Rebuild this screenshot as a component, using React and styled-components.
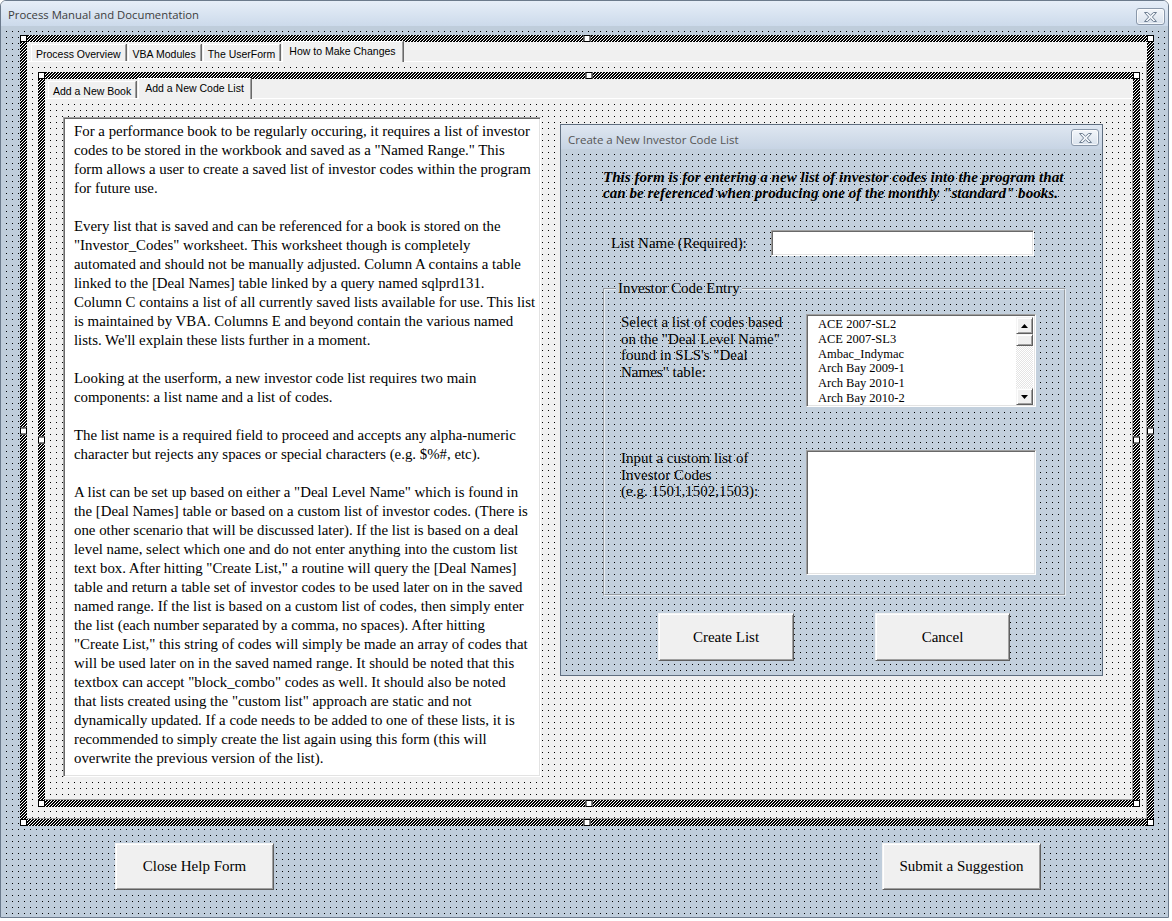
import React from 'react';
import styled, { createGlobalStyle, css } from 'styled-components';

const GlobalStyle = createGlobalStyle`
  html, body {
    margin: 0;
    padding: 0;
    background: #ffffff;
  }
  body {
    font-family: "Liberation Serif", "Times New Roman", serif;
    color: #000;
  }
  * {
    box-sizing: border-box;
  }
`;

// designer grid: one black pixel every 6px on the given colour
const dotGrid = (bg) => css`
  background-color: #000;
  background-image: linear-gradient(90deg, ${bg} 5px, transparent 5px),
    linear-gradient(${bg} 5px, transparent 5px);
  background-size: 6px 6px;
`;

const hatch = `url("data:image/svg+xml,%3Csvg xmlns='http://www.w3.org/2000/svg' width='3' height='3'%3E%3Crect width='3' height='3' fill='white'/%3E%3Cpath d='M1 0h2v1H1zM0 1h2v1H0zM2 2h1v1H2zM0 2h1v1H0z' fill='black'/%3E%3C/svg%3E")`;

const raised = css`
  background: #f0f0f0;
  border: 1px solid;
  border-color: #f4f4f4 #5f5f5f #5f5f5f #f4f4f4;
  box-shadow: inset 1px 1px 0 #ffffff, inset -1px -1px 0 #a0a0a0;
`;

const sunken = css`
  background: #ffffff;
  border: 1px solid;
  border-color: #a0a0a0 #ffffff #ffffff #a0a0a0;
  box-shadow: inset 1px 1px 0 #696969, inset -1px -1px 0 #e3e3e3;
`;

const Window = styled.div`
  width: 1169px;
  height: 918px;
  border: 1px solid #6b7a8c;
  border-radius: 6px 6px 0 0;
  display: flex;
  flex-direction: column;
  overflow: hidden;
`;

const TitleBar = styled.div`
  height: 25px;
  flex: none;
  display: flex;
  justify-content: space-between;
  align-items: flex-start;
  padding: 0 3px 0 7px;
  background: linear-gradient(#e6eef8, #ccdaeb);
`;

const Title = styled.div`
  font-family: "Open Sans", "Noto Sans", sans-serif;
  font-size: 11.3px;
  line-height: 28px;
  color: #3d3d3d;
`;

const CloseBox = styled.div`
  width: ${({ $w }) => $w}px;
  height: 17px;
  margin-top: ${({ $top }) => $top}px;
  margin-right: ${({ $right }) => $right}px;
  border: 1px solid #8a98aa;
  border-radius: 3px;
  background: linear-gradient(#f3f6fa, #d9e2ed);
  box-shadow: inset 0 0 0 1px rgba(255, 255, 255, 0.7);
  display: flex;
  align-items: center;
  justify-content: center;
`;

const FormBody = styled.div`
  flex: 1;
  ${dotGrid('#bfcddb')}
  padding: 9px 0 0 19px;
  display: flex;
  flex-direction: column;
`;

const Selection = styled.div`
  position: relative;
  width: ${({ $w }) => $w}px;
  height: ${({ $h }) => $h}px;
  padding: 7px;
  background: ${hatch};
`;

const Handle = styled.span`
  position: absolute;
  width: 7px;
  height: 7px;
  background: #fff;
  border: 1px solid #000;
  ${({ $pos }) => $pos.includes('t') && css`top: 0;`}
  ${({ $pos }) => $pos.includes('b') && css`bottom: 0;`}
  ${({ $pos }) => $pos.includes('l') && css`left: 0;`}
  ${({ $pos }) => $pos.includes('r') && css`right: 0;`}
  ${({ $pos }) => ($pos === 't' || $pos === 'b') && css`left: 50%; transform: translateX(-50%);`}
  ${({ $pos }) => ($pos === 'l' || $pos === 'r') && css`top: 50%; transform: translateY(-50%);`}
`;

const MultiPage = styled.div`
  width: 100%;
  height: 100%;
  display: flex;
  flex-direction: column;
  background: #f0f0f0;
`;

const TabStrip = styled.div`
  height: 20px;
  flex: none;
  display: flex;
  align-items: flex-end;
  padding-left: ${({ $pl }) => $pl}px;
  border-bottom: 1px solid #ffffff;
`;

const Tab = styled.div`
  position: relative;
  height: ${({ $active }) => ($active ? 21 : 17)}px;
  margin-bottom: ${({ $active }) => ($active ? -1 : 0)}px;
  padding: ${({ $active }) => ($active ? '2px 6px 0' : '2px 4px 0')};
  margin-right: 2px;
  font-family: "Liberation Sans", Arial, sans-serif;
  font-size: 10.5px;
  line-height: 14px;
  white-space: nowrap;
  background: #f0f0f0;
  border-top: 1px solid #ffffff;
  border-left: 1px solid #ffffff;
  border-right: 1px solid #a0a0a0;
  box-shadow: 1px 0 0 #696969;
  z-index: ${({ $active }) => ($active ? 1 : 0)};
`;

const Page = styled.div`
  flex: 1;
  ${dotGrid('#f0f0f0')}
  border-right: 1px solid #a0a0a0;
  border-bottom: 1px solid #a0a0a0;
  padding: ${({ $pad }) => $pad};
  display: flex;
  align-items: flex-start;
`;

const TextBox = styled.div`
  ${sunken}
  width: 478px;
  height: 660px;
  flex: none;
  padding: 4px 6px 0 10px;
  font-size: 14.85px;
  line-height: 19px;
`;

const TextLine = styled.div`
  height: 19px;
  white-space: nowrap;
`;

const EmbeddedForm = styled.div`
  width: 543px;
  height: 552px;
  margin: 7px 0 0 19px;
  flex: none;
  border: 1px solid #5f6e80;
  display: flex;
  flex-direction: column;
`;

const EmbeddedTitle = styled.div`
  height: 24px;
  flex: none;
  display: flex;
  justify-content: space-between;
  align-items: flex-start;
  padding-left: 7px;
  background: linear-gradient(#dfe7f1, #c7d4e4);
  font-family: "Open Sans", "Noto Sans", sans-serif;
  font-size: 11.5px;
  line-height: 29px;
  color: #555;
`;

const EmbeddedBody = styled.div`
  flex: 1;
  ${dotGrid('#c3d0dd')}
  padding: 20px 0 0 42px;
  display: flex;
  flex-direction: column;
`;

const Intro = styled.div`
  font-weight: bold;
  font-style: italic;
  font-size: 15.1px;
  line-height: 16px;
  white-space: nowrap;
`;

const NameRow = styled.div`
  margin-top: 29px;
  padding-left: 8px;
  display: flex;
  align-items: center;
`;

const Label = styled.div`
  width: ${({ $w }) => $w}px;
  font-size: 15px;
  line-height: ${({ $lh }) => $lh || 17}px;
  flex: none;
`;

const Input = styled.div`
  ${sunken}
  width: ${({ $w }) => $w}px;
  height: ${({ $h }) => $h}px;
  flex: none;
`;

const Frame = styled.fieldset`
  width: 463px;
  margin: 24px 0 0;
  padding: 17px 0 19px 16px;
  border: 2px groove #e8eef4;
  min-width: 0;
`;

const FrameLegend = styled.legend`
  margin-left: -5px;
  padding: 0 2px;
  font-size: 15px;
  line-height: 17px;
`;

const FrameRow = styled.div`
  display: flex;
  align-items: flex-start;
  margin-top: ${({ $mt }) => $mt || 0}px;
`;

const ListBox = styled.div`
  ${sunken}
  width: 230px;
  height: 93px;
  display: flex;
  padding: 1px 2px 1px 1px;
`;

const ListItems = styled.div`
  flex: 1;
  padding: 1px 0 0 10px;
  font-size: 12.5px;
  line-height: 14.8px;
  overflow: hidden;
`;

const ScrollBar = styled.div`
  width: 17px;
  margin-top: 1px;
  display: flex;
  flex-direction: column;
  background: repeating-conic-gradient(#ffffff 0 25%, #e4e4e4 0 50%) 0 0 / 2px 2px;
`;

const ScrollButton = styled.div`
  ${raised}
  height: ${({ $h }) => $h}px;
  flex: none;
  display: flex;
  align-items: center;
  justify-content: center;
`;

const ScrollTrack = styled.div`
  flex: 1;
`;

const ButtonRow = styled.div`
  display: flex;
  gap: ${({ $gap }) => $gap}px;
  margin-top: ${({ $mt }) => $mt}px;
  padding-left: ${({ $pl }) => $pl}px;
`;

const FormButton = styled.div`
  ${raised}
  width: ${({ $w }) => $w}px;
  height: ${({ $h }) => $h}px;
  display: flex;
  align-items: center;
  justify-content: center;
  font-size: 15px;
`;

const CloseGlyph = ({ w = 13, h = 10 }) => (
  <svg width={w} height={h} viewBox="0 0 13 10">
    <polygon
      points="0.5,0.5 3.5,0.5 6.5,3.2 9.5,0.5 12.5,0.5 8.4,5 12.5,9.5 9.5,9.5 6.5,6.8 3.5,9.5 0.5,9.5 4.6,5"
      fill="#eef2f7"
      stroke="#6f7f92"
      strokeWidth="1"
    />
  </svg>
);

const Arrow = ({ up }) => (
  <svg width="7" height="4" viewBox="0 0 7 4">
    <polygon points={up ? '3.5,0 7,4 0,4' : '0,0 7,0 3.5,4'} fill="#000" />
  </svg>
);

const handles = ['tl', 't', 'tr', 'l', 'r', 'bl', 'b', 'br'];

const helpLines = [
  'For a performance book to be regularly occuring, it requires a list of investor',
  'codes to be stored in the workbook and saved as a "Named Range." This',
  'form allows a user to create a saved list of investor codes within the program',
  'for future use.',
  '',
  'Every list that is saved and can be referenced for a book is stored on the',
  '"Investor_Codes" worksheet. This worksheet though is completely',
  'automated and should not be manually adjusted. Column A contains a table',
  'linked to the [Deal Names] table linked by a query named sqlprd131.',
  'Column C contains a list of all currently saved lists available for use. This list',
  'is maintained by VBA. Columns E and beyond contain the various named',
  "lists. We'll explain these lists further in a moment.",
  '',
  'Looking at the userform, a new investor code list requires two main',
  'components: a list name and a list of codes.',
  '',
  'The list name is a required field to proceed and accepts any alpha-numeric',
  'character but rejects any spaces or special characters (e.g. $%#, etc).',
  '',
  'A list can be set up based on either a "Deal Level Name" which is found in',
  'the [Deal Names] table or based on a custom list of investor codes. (There is',
  'one other scenario that will be discussed later). If the list is based on a deal',
  'level name, select which one and do not enter anything into the custom list',
  'text box. After hitting "Create List," a routine will query the [Deal Names]',
  'table and return a table set of investor codes to be used later on in the saved',
  'named range. If the list is based on a custom list of codes, then simply enter',
  'the list (each number separated by a comma, no spaces). After hitting',
  '"Create List," this string of codes will simply be made an array of codes that',
  'will be used later on in the saved named range. It should be noted that this',
  'textbox can accept "block_combo" codes as well. It should also be noted',
  'that lists created using the "custom list" approach are static and not',
  'dynamically updated. If a code needs to be added to one of these lists, it is',
  'recommended to simply create the list again using this form (this will',
  'overwrite the previous version of the list).',
];

const dealNames = [
  'ACE 2007-SL2',
  'ACE 2007-SL3',
  'Ambac_Indymac',
  'Arch Bay 2009-1',
  'Arch Bay 2010-1',
  'Arch Bay 2010-2',
];

const outerTabs = ['Process Overview', 'VBA Modules', 'The UserForm', 'How to Make Changes'];
const innerTabs = ['Add a New Book', 'Add a New Code List'];

const InvestorCodeForm = () => (
  <EmbeddedForm>
    <EmbeddedTitle>
      Create a New Investor Code List
      <CloseBox $w={28} $top={4} $right={3}>
        <CloseGlyph />
      </CloseBox>
    </EmbeddedTitle>
    <EmbeddedBody>
      <Intro>
        This form is for entering a new list of investor codes into the program that
        <br />
        can be referenced when producing one of the monthly "standard" books.
      </Intro>
      <NameRow>
        <Label $w={160}>List Name (Required):</Label>
        <Input $w={263} $h={26} />
      </NameRow>
      <Frame>
        <FrameLegend>Investor Code Entry</FrameLegend>
        <FrameRow>
          <Label $w={185} $lh={16.7}>
            Select a list of codes based
            <br />
            on the "Deal Level Name"
            <br />
            found in SLS's "Deal
            <br />
            Names" table:
          </Label>
          <ListBox>
            <ListItems>
              {dealNames.map((name) => (
                <div key={name}>{name}</div>
              ))}
            </ListItems>
            <ScrollBar>
              <ScrollButton $h={17}>
                <Arrow up />
              </ScrollButton>
              <ScrollButton $h={12} />
              <ScrollTrack />
              <ScrollButton $h={17}>
                <Arrow />
              </ScrollButton>
            </ScrollBar>
          </ListBox>
        </FrameRow>
        <FrameRow $mt={43}>
          <Label $w={185} $lh={16.7}>
            Input a custom list of
            <br />
            Investor Codes
            <br />
            (e.g. 1501,1502,1503):
          </Label>
          <Input $w={230} $h={125} />
        </FrameRow>
      </Frame>
      <ButtonRow $mt={17} $pl={55} $gap={81}>
        <FormButton $w={136} $h={48}>Create List</FormButton>
        <FormButton $w={135} $h={48}>Cancel</FormButton>
      </ButtonRow>
    </EmbeddedBody>
  </EmbeddedForm>
);

const App = () => (
  <>
    <GlobalStyle />
    <Window>
      <TitleBar>
        <Title>Process Manual and Documentation</Title>
        <CloseBox $w={29} $top={7} $right={0}>
          <CloseGlyph />
        </CloseBox>
      </TitleBar>
      <FormBody>
        <Selection $w={1134} $h={791}>
          {handles.map((p) => (
            <Handle key={p} $pos={p} />
          ))}
          <MultiPage>
            <TabStrip $pl={4}>
              {outerTabs.map((t, i) => (
                <Tab key={t} $active={i === outerTabs.length - 1}>
                  {t}
                </Tab>
              ))}
            </TabStrip>
            <Page $pad="10px 0 0 11px">
              <Selection $w={1102} $h={735}>
                {handles.map((p) => (
                  <Handle key={p} $pos={p} />
                ))}
                <MultiPage>
                  <TabStrip $pl={3}>
                    {innerTabs.map((t, i) => (
                      <Tab key={t} $active={i === 1}>
                        {t}
                      </Tab>
                    ))}
                  </TabStrip>
                  <Page $pad="18px 0 0 18px">
                    <TextBox>
                      {helpLines.map((line, i) => (
                        <TextLine key={i}>{line}</TextLine>
                      ))}
                    </TextBox>
                    <InvestorCodeForm />
                  </Page>
                </MultiPage>
              </Selection>
            </Page>
          </MultiPage>
        </Selection>
        <ButtonRow $mt={17} $pl={95} $gap={608}>
          <FormButton $w={159} $h={47}>Close Help Form</FormButton>
          <FormButton $w={159} $h={47}>Submit a Suggestion</FormButton>
        </ButtonRow>
      </FormBody>
    </Window>
  </>
);

export default App;
